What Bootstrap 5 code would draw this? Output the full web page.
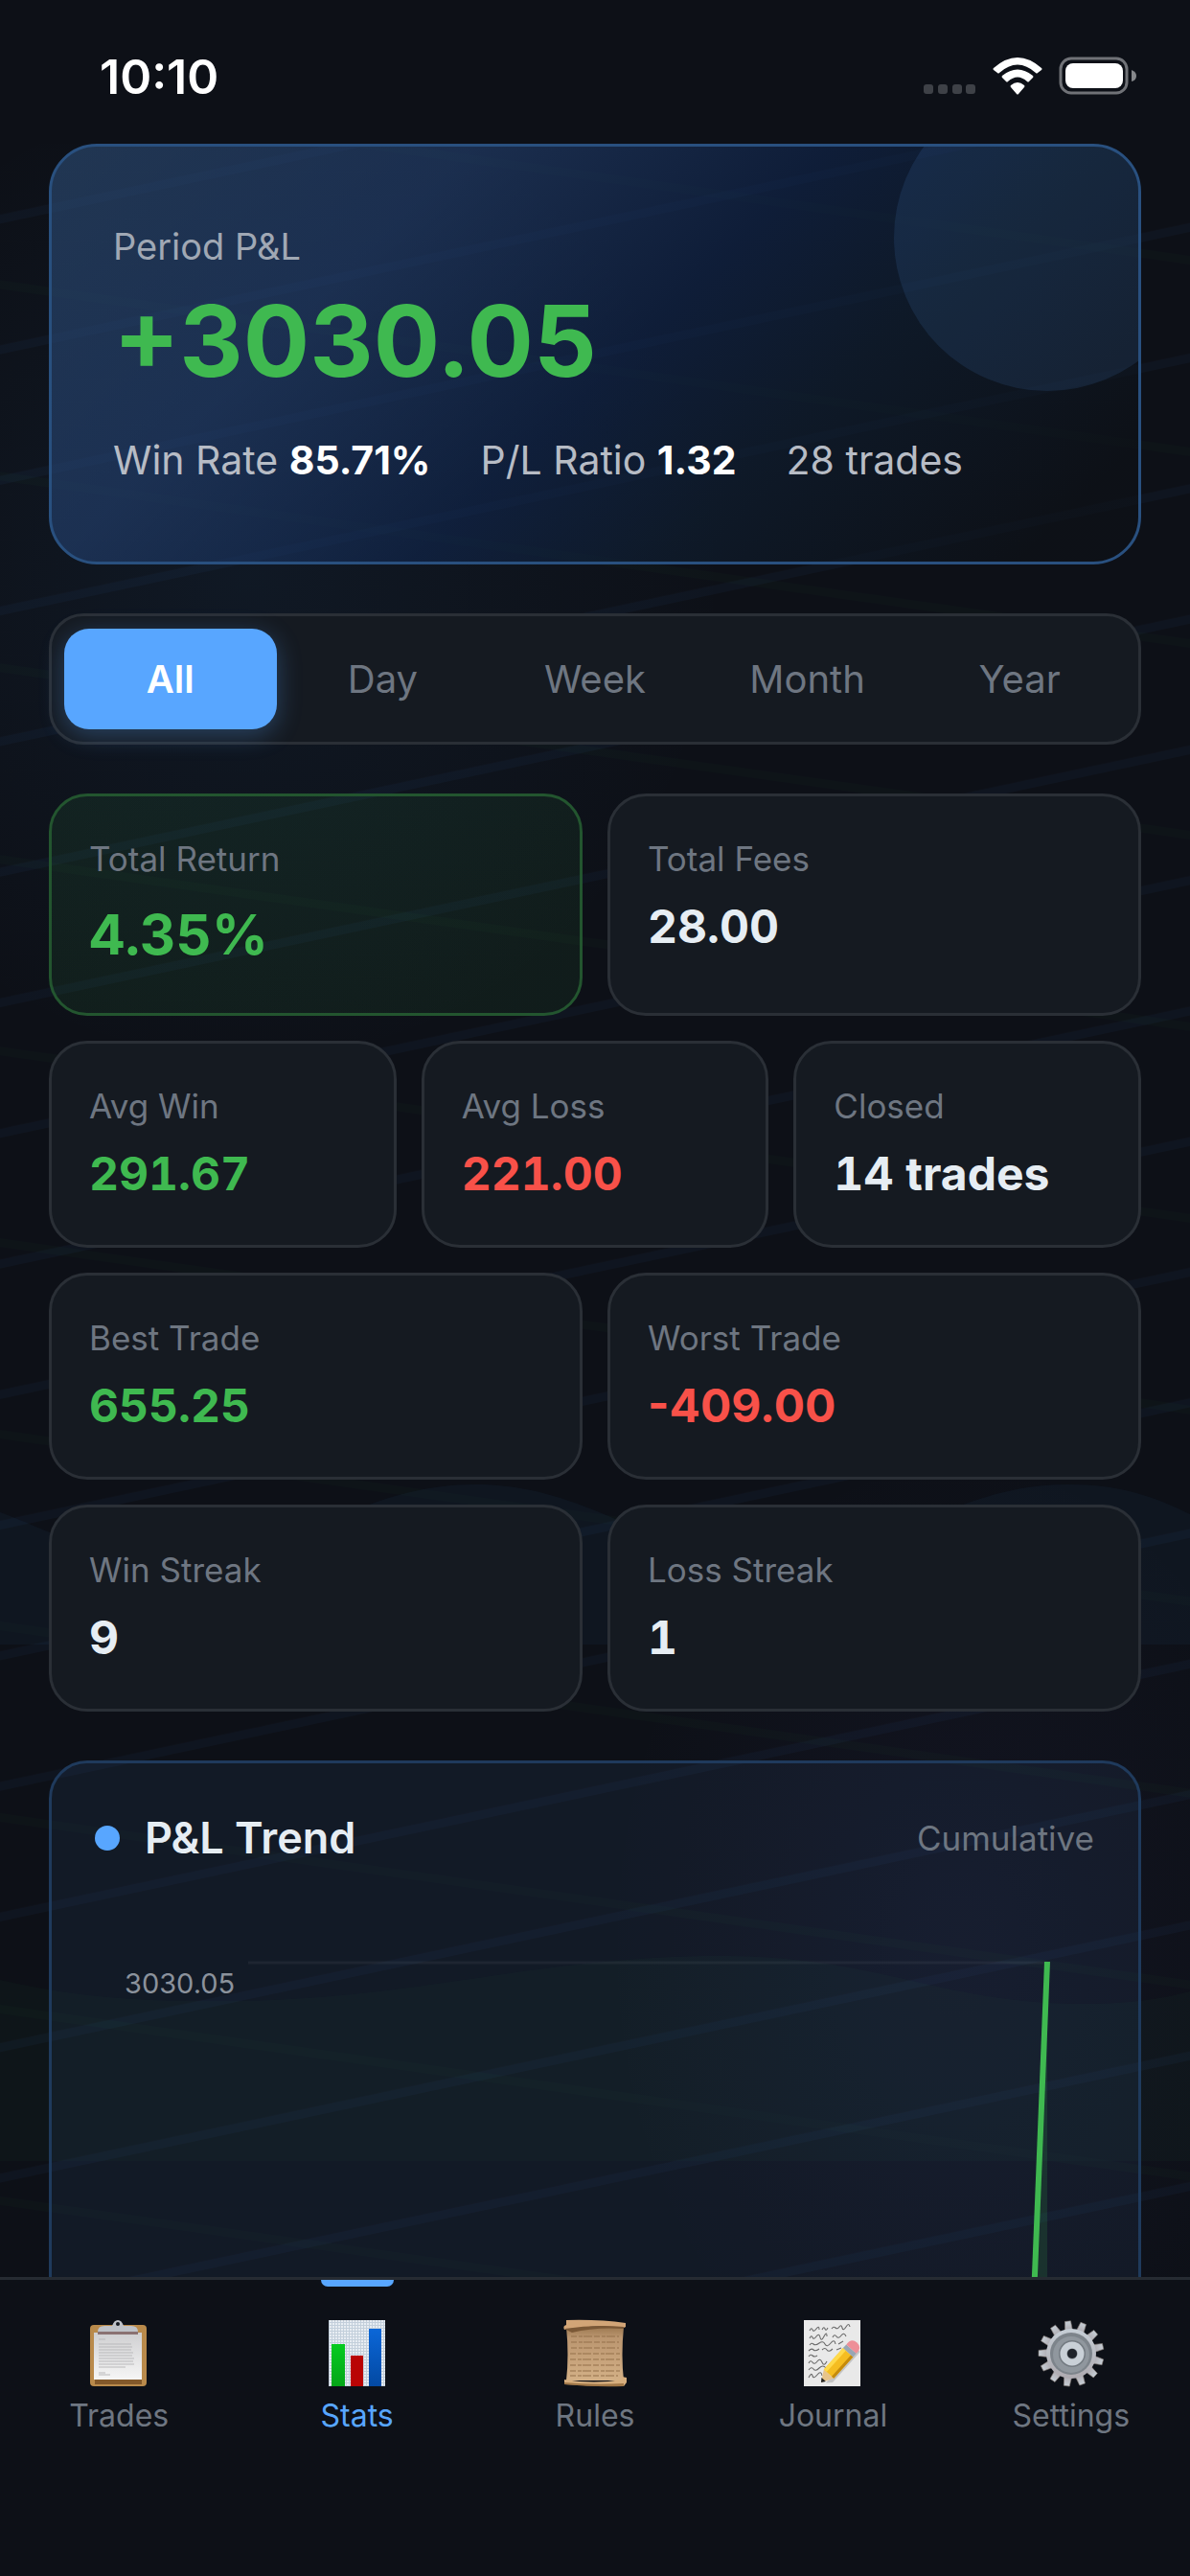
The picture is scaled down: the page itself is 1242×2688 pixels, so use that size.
<!DOCTYPE html>
<html lang="en" data-bs-theme="dark">
<head>
<meta charset="utf-8">
<meta name="viewport" content="width=device-width, initial-scale=1">
<title>Trading Stats</title>
<link rel="stylesheet" href="https://cdn.jsdelivr.net/npm/bootstrap@5.3.0/dist/css/bootstrap.min.css">
<style>
  :root { --page: #0d1017; --panel: #151a21; --line: #2a2f36; --muted: #6e7681; --blue: #58a6ff; --green: #3fb950; --red: #f85149; --bright: #e6edf3; }
  body { font-family: Inter, "Liberation Sans", sans-serif; background: var(--page); color: var(--bright); }
  a { text-decoration: none; }
  .status-bar { height: 150px; padding: 10px 54px 0 104px; color: #fff; }
  .clock { font-size: 50px; line-height: 60px; font-weight: 600; }
  .stage { min-height: 0; }
  .backdrop { inset: 0; width: 100%; height: 100%; }
  .scroller { height: 100%; overflow-y: auto; scrollbar-width: none; padding: 0 51px; }
  .scroller::-webkit-scrollbar { display: none; }
  .text-up { color: var(--green); }
  .text-down { color: var(--red); }

  .hero { height: 439px; padding: 78px 64px 0; border: 3px solid #29507f; border-radius: 50px; overflow: hidden;
    background: linear-gradient(135deg, rgba(46,79,121,.6) 0%, rgba(36,66,115,.6) 28%, rgba(16,38,78,.6) 52%, rgba(15,31,51,.6) 68%, rgba(13,17,23,.6) 92%); }
  .hero-disc { width: 320px; height: 320px; right: -65px; top: -65px; background: rgba(88,166,255,.11); }
  .hero-label { font-size: 38px; line-height: 52px; color: #a0a8b4; }
  .hero-value { font-size: 103px; line-height: 120px; font-weight: 700; margin-top: 13px; }
  .hero-facts { font-size: 41px; line-height: 52px; gap: 52px; margin-top: 38px; color: #b7bcc5; }
  .hero-facts strong { color: #fff; font-weight: 700; }

  .period-tabs { margin-top: 51px; padding: 13px; border: 3px solid var(--line); border-radius: 36px; background: var(--panel); }
  .period-tabs .btn { height: 105px; padding: 0; border: 0; border-radius: 26px; font-size: 40px; color: var(--muted); }
  .period-tabs .btn.active { background: var(--blue); color: #fff; font-weight: 600; box-shadow: 0 6px 26px rgba(88,166,255,.3); }

  .stat-rows { margin-top: 51px; gap: 26px; }
  .stat-row { gap: 26px; }
  .stat { flex: 1 1 0; min-width: 0; padding: 40px 39px 42px; border: 3px solid var(--line); border-radius: 40px; background: var(--panel); }
  .stat-up { border-color: #23552f; background: linear-gradient(135deg, rgba(63,185,80,.09), rgba(63,185,80,.07)); }
  .stat-label { font-size: 35px; line-height: 50px; color: var(--muted); }
  .stat-value { font-size: 48px; line-height: 64px; font-weight: 700; margin-top: 14px; font-variant-numeric: tabular-nums; }
  .stat-value-lg { font-size: 58px; line-height: 80px; }
  .figures-plain { font-variant-numeric: normal; }

  .trend { height: 900px; margin-top: 51px; padding: 42px 45px; border: 3px solid #1f3a5c; border-radius: 40px; background: rgba(56,96,150,.12); }
  .trend-dot { width: 26px; height: 26px; background: var(--blue); }
  .trend-title { font-size: 45px; line-height: 72px; font-weight: 600; margin-left: 26px; color: var(--bright); }
  .trend-note { font-size: 35px; color: var(--muted); margin-right: 1px; }
  .trend-chart { width: 100%; height: 700px; margin-top: 46px; }

  .tab-bar { height: 312px; border-top: 3px solid #262b32; background: var(--page); }
  .tab-bar a { flex: 1 1 0; padding-top: 41px; font-size: 32px; line-height: 40px; color: var(--muted); }
  .tab-bar a.active { color: var(--blue); }
  .tab-bar a.active::before { content: ""; position: absolute; top: 0; left: 50%; margin-left: -38px; width: 76px; height: 7px; border-radius: 0 0 8px 8px; background: var(--blue); }
  .tab-bar svg { width: 72px; height: 72px; margin-bottom: 9px; }
</style>
</head>
<body>
<div class="vh-100 d-flex flex-column overflow-hidden">
  <header class="status-bar d-flex align-items-center justify-content-between flex-shrink-0">
    <div class="clock">10:10</div>
    <svg width="224" height="42" viewBox="0 0 224 42" role="img" aria-label="Wi-Fi and battery">
      <g fill="#3e4147"><rect x="0" y="29" width="10" height="10" rx="3"/><rect x="15" y="29" width="10" height="10" rx="3"/><rect x="30" y="29" width="10" height="10" rx="3"/><rect x="44" y="29" width="10" height="10" rx="3"/></g>
      <g fill="#fff"><path d="M73 12Q98 -10 123 12Q124 13 123 14L119 17Q118 18 117 17Q98 0 79 17Q78 18 77 17L73 14Q72 13 73 12Z"/><path d="M82 20Q98 7 114 20Q115 21 114 22L110 26Q109 27 108 26Q98 17 88 26Q87 27 86 26L82 22Q81 21 82 20Z"/><path d="M91 30Q98 24 105 30Q106 31 105 32L99 39Q98 40 97 39L91 32Q90 31 91 30Z"/></g>
      <rect x="143" y="2" width="69" height="36" rx="11" fill="none" stroke="#707277" stroke-width="3"/>
      <rect x="148" y="7" width="60" height="26" rx="8" fill="#fff"/>
      <path d="M217 14Q222 16 222 20Q222 25 217 26Z" fill="#85878b"/>
    </svg>
  </header>

  <main class="stage position-relative flex-grow-1 overflow-hidden">
    <svg class="backdrop position-absolute" viewBox="0 0 1242 2226" preserveAspectRatio="none" aria-hidden="true">
      <defs>
        <pattern id="rising" width="300" height="133.3" patternUnits="userSpaceOnUse" patternTransform="rotate(-12)"><rect y="72.5" width="300" height="9" fill="#58a6ff" opacity=".038"/></pattern>
        <pattern id="falling" width="300" height="198" patternUnits="userSpaceOnUse" patternTransform="rotate(8)"><rect y="141" width="300" height="9" fill="#3fb950" opacity=".022"/></pattern>
        <radialGradient id="glowBlue"><stop offset="0" stop-color="#388bd8" stop-opacity=".07"/><stop offset="1" stop-color="#388bd8" stop-opacity="0"/></radialGradient>
        <radialGradient id="glowViolet"><stop offset="0" stop-color="#7a66e0" stop-opacity=".055"/><stop offset="1" stop-color="#7a66e0" stop-opacity="0"/></radialGradient>
      </defs>
      <ellipse cx="260" cy="450" rx="500" ry="520" fill="url(#glowBlue)"/>
      <ellipse cx="1000" cy="1880" rx="370" ry="520" fill="url(#glowViolet)"/>
      <path d="M0 1428C60 1450 100 1478 186 1478C310 1478 370 1399 496 1399C620 1399 680 1478 806 1478C930 1478 990 1399 1115 1399C1170 1399 1205 1412 1242 1430V1566H0Z" fill="#3f8fd8" opacity=".05"/>
      <path d="M0 1916C90 1936 150 1938 230 1938C430 1938 560 1891 750 1891C920 1891 980 1941 1130 1941C1180 1941 1210 1936 1242 1928V2105H0Z" fill="#3fb950" opacity=".032"/>
      <rect width="1242" height="2226" fill="url(#falling)"/>
      <rect width="1242" height="2226" fill="url(#rising)"/>
    </svg>

    <div class="scroller position-relative">
      <section class="hero position-relative">
        <span class="hero-disc position-absolute rounded-circle"></span>
        <div class="hero-label">Period P&amp;L</div>
        <div class="hero-value text-up">+3030.05</div>
        <div class="hero-facts d-flex">
          <span>Win Rate <strong>85.71%</strong></span>
          <span>P/L Ratio <strong>1.32</strong></span>
          <span>28 trades</span>
        </div>
      </section>

      <div class="period-tabs d-flex" role="group" aria-label="Period">
        <button type="button" class="btn flex-fill w-100 active" aria-pressed="true">All</button>
        <button type="button" class="btn flex-fill w-100">Day</button>
        <button type="button" class="btn flex-fill w-100">Week</button>
        <button type="button" class="btn flex-fill w-100">Month</button>
        <button type="button" class="btn flex-fill w-100">Year</button>
      </div>

      <section class="stat-rows d-flex flex-column">
        <div class="stat-row d-flex">
          <div class="stat stat-up"><div class="stat-label">Total Return</div><div class="stat-value stat-value-lg text-up">4.35%</div></div>
          <div class="stat"><div class="stat-label">Total Fees</div><div class="stat-value">28.00</div></div>
        </div>
        <div class="stat-row d-flex">
          <div class="stat"><div class="stat-label">Avg Win</div><div class="stat-value text-up">291.67</div></div>
          <div class="stat"><div class="stat-label">Avg Loss</div><div class="stat-value text-down">221.00</div></div>
          <div class="stat"><div class="stat-label">Closed</div><div class="stat-value">14 trades</div></div>
        </div>
        <div class="stat-row d-flex">
          <div class="stat"><div class="stat-label">Best Trade</div><div class="stat-value text-up">655.25</div></div>
          <div class="stat"><div class="stat-label">Worst Trade</div><div class="stat-value figures-plain text-down">-409.00</div></div>
        </div>
        <div class="stat-row d-flex">
          <div class="stat"><div class="stat-label">Win Streak</div><div class="stat-value">9</div></div>
          <div class="stat"><div class="stat-label">Loss Streak</div><div class="stat-value">1</div></div>
        </div>
      </section>

      <section class="trend">
        <div class="d-flex align-items-center">
          <span class="trend-dot rounded-circle"></span>
          <h2 class="trend-title mb-0">P&amp;L Trend</h2>
          <span class="trend-note ms-auto">Cumulative</span>
        </div>
        <svg class="trend-chart d-block" viewBox="0 0 1044 700" role="img" aria-label="Cumulative profit and loss">
          <path d="M160 48H994" stroke="#fff" stroke-opacity=".05" stroke-width="3"/>
          <path d="M994 48V700H967Z" fill="#3fb950" opacity=".15"/>
          <path d="M994 47L968 700" stroke="#3fb950" stroke-width="6"/>
          <text x="31" y="80" font-size="29" fill="#8b929c">3030.05</text>
        </svg>
      </section>
    </div>
  </main>

  <nav class="tab-bar d-flex flex-shrink-0" aria-label="Main">
    <a href="#" class="position-relative d-flex flex-column align-items-center">
      <svg viewBox="0 0 72 72" aria-hidden="true">
        <defs><linearGradient id="paper" x2="0" y2="1"><stop offset="0" stop-color="#cfcfd1"/><stop offset="1" stop-color="#f6f6f6"/></linearGradient></defs>
        <rect x="6" y="6" width="59" height="64" rx="4" fill="#b98a4b"/><rect x="11" y="61" width="49" height="7" fill="#83592b"/>
        <rect x="10" y="14" width="50" height="49" fill="url(#paper)"/>
        <path d="M15 21h7M15 26h34M15 29h35M15 32h34M15 35h36M15 38h35M15 41h37M15 44h36M15 47h37M15 50h28M15 56h7M15 58h12" stroke="#b9b9bb" stroke-width="1"/>
        <path d="M14 13Q14 7 21 7H29Q31 1 35 1T41 7H49Q56 7 56 13V14H14Z" fill="#bfc2c8"/><path d="M14 13h42v3H14z" fill="#8a7272"/><circle cx="35" cy="5" r="2" fill="#15181f"/>
      </svg>
      <span>Trades</span>
    </a>
    <a href="#" class="active position-relative d-flex flex-column align-items-center" aria-current="page">
      <svg viewBox="0 0 72 72" aria-hidden="true">
        <defs>
          <pattern id="graph" width="3" height="3" patternUnits="userSpaceOnUse"><rect width="3" height="3" fill="#e8edf3"/><path d="M0 .5H3M.5 0V3" stroke="#c3cfdb" stroke-width="1"/></pattern>
          <linearGradient id="gBar" x2="0" y2="1"><stop offset="0" stop-color="#06cb20"/><stop offset="1" stop-color="#05a518"/></linearGradient>
          <linearGradient id="bBar" x2="0" y2="1"><stop offset="0" stop-color="#0b67d8"/><stop offset="1" stop-color="#0349a2"/></linearGradient>
        </defs>
        <rect x="6" y="1" width="59" height="69" fill="url(#graph)"/>
        <rect x="9" y="26" width="14" height="44" fill="url(#gBar)"/><rect x="29" y="38" width="13" height="32" fill="#b90404"/><rect x="48" y="10" width="13" height="60" fill="url(#bBar)"/>
      </svg>
      <span>Stats</span>
    </a>
    <a href="#" class="position-relative d-flex flex-column align-items-center">
      <svg viewBox="0 0 72 72" aria-hidden="true">
        <defs><linearGradient id="scroll" x2="0" y2="1"><stop offset="0" stop-color="#9c7850"/><stop offset=".2" stop-color="#bb9670"/><stop offset="1" stop-color="#d3b086"/></linearGradient></defs>
        <path d="M6 8H66Q63 38 66 64H6Q9 38 6 8Z" fill="url(#scroll)"/>
        <path d="M11 18h50M11 24h50M11 30h50M10 36h52M10 42h52M10 48h52M10 54h52M10 59h50" stroke="#94704a" stroke-width="1.2" stroke-dasharray="6 2 4 1 9 2"/>
        <path d="M6 1Q40 0 68 4V8L66 9Q36 5 4 11Q2 7 6 6Z" fill="#d2a577"/><path d="M4 10Q36 5 66 8V10Q36 8 12 14Z" fill="#7b5836"/>
        <path d="M4 63Q36 68 64 63V60L69 61V66L66 70Q34 70 4 68Z" fill="#d6ae7e"/><path d="M4 66Q34 69 66 67V70Q34 71 4 68Z" fill="#a07748"/>
      </svg>
      <span>Rules</span>
    </a>
    <a href="#" class="position-relative d-flex flex-column align-items-center">
      <svg viewBox="0 0 72 72" aria-hidden="true">
        <rect x="6" y="1" width="59" height="69" fill="#e9e9e9"/>
        <g fill="none" stroke="#6a6a6a" stroke-width="1.1"><path d="M12 12q2-4 3-1t4-1 3 1m3 0q2-4 3-1t3-1m4 1q2-3 4-1t4-1 3 1 4-1 4 0M12 20q2-4 3-1t4-1 4 1 4-1 3 0m6 1q2-4 4-1t5-1 5 1M12 27q2-3 4-1t6-1 6 1 6-1 5 1m3 0l5-3M11 33q3-3 5-1t6-1m3 1q3-3 5 0t6-1m4 1l5-2M11 39q2-3 4-1t5 0M11 46q2-4 4-1t5-1 5 1 5-1M11 53q3-4 5-1t6-1 7 0M11 61q3-6 4-2t5-1 5 1"/></g>
        <g transform="translate(24 66) rotate(-48)"><path d="M3 4H51V9H8Z" fill="#8b8b8b" opacity=".4"/><path d="M0 0L12 -7V7Z" fill="#e8c48a"/><path d="M0 0L4 -3V3Z" fill="#222"/><path d="M12 -7H42V7H12Z" fill="#f5bd21"/><path d="M12 -7H42V-3H12Z" fill="#ffda4c"/><path d="M12 4H42V7H12Z" fill="#c58b0c"/><path d="M42 -7H47V7H42Z" fill="#98a6b4"/><path d="M47 -7Q56 -8 56 0T47 7Z" fill="#ee8f98"/></g>
      </svg>
      <span>Journal</span>
    </a>
    <a href="#" class="position-relative d-flex flex-column align-items-center">
      <svg viewBox="0 0 72 72" aria-hidden="true">
        <defs>
          <linearGradient id="steel" x2="0" y2="1"><stop offset="0" stop-color="#c6ced6"/><stop offset="1" stop-color="#aeaab0"/></linearGradient>
          <path id="tooth" d="M32 12L33 2H39L40 12Z"/>
        </defs>
        <g fill="url(#steel)" stroke="#857d78" stroke-width=".6">
          <use href="#tooth" transform="rotate(-6 36 36)"/><use href="#tooth" transform="rotate(22 36 36)"/><use href="#tooth" transform="rotate(49 36 36)"/><use href="#tooth" transform="rotate(77 36 36)"/><use href="#tooth" transform="rotate(105 36 36)"/><use href="#tooth" transform="rotate(132 36 36)"/><use href="#tooth" transform="rotate(160 36 36)"/><use href="#tooth" transform="rotate(188 36 36)"/><use href="#tooth" transform="rotate(215 36 36)"/><use href="#tooth" transform="rotate(243 36 36)"/><use href="#tooth" transform="rotate(271 36 36)"/><use href="#tooth" transform="rotate(298 36 36)"/><use href="#tooth" transform="rotate(326 36 36)"/>
        </g>
        <circle cx="36" cy="36" r="26" fill="url(#steel)"/><circle cx="36" cy="36" r="22" fill="#7d848b"/><circle cx="36" cy="37" r="19" fill="#90979e"/><circle cx="37" cy="36" r="14" fill="#747b82"/>
        <circle cx="37" cy="36" r="9" fill="none" stroke="#c9d0d7" stroke-width="7"/><circle cx="37" cy="36" r="5" fill="#20242b"/>
      </svg>
      <span>Settings</span>
    </a>
  </nav>
</div>
<script src="https://cdn.jsdelivr.net/npm/bootstrap@5.3.0/dist/js/bootstrap.bundle.min.js"></script>
</body>
</html>
